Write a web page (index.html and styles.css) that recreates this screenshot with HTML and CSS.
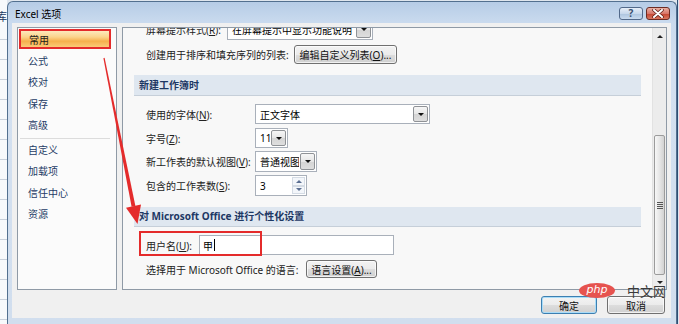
FILE: index.html
```html
<!DOCTYPE html>
<html lang="zh-CN">
<head>
    <meta charset="UTF-8">
    <title>Excel 选项</title>
    <link rel="stylesheet" href="styles.css">
</head>
<body>
    <div class="desktop">
        <div class="sheet-left"><span class="sheet-char">库</span></div>

        <div class="window">
            <div class="titlebar">
                <span class="title">Excel 选项</span>
                <div class="caption">
                    <span class="cap-btn help">?</span>
                    <span class="cap-btn close">
                        <svg width="12" height="9" viewBox="0 0 12 9">
                            <path d="M2 1 L10 8 M10 1 L2 8" stroke="#5a1a12" stroke-width="3.4" stroke-linecap="round"/>
                            <path d="M2 1 L10 8 M10 1 L2 8" stroke="#fff" stroke-width="2" stroke-linecap="round"/>
                        </svg>
                    </span>
                </div>
            </div>

            <div class="client">
                <div class="panels">
                    <ul class="nav">
                        <li class="active">常用</li>
                        <li>公式</li>
                        <li>校对</li>
                        <li>保存</li>
                        <li>高级</li>
                        <li class="sep"></li>
                        <li>自定义</li>
                        <li>加载项</li>
                        <li>信任中心</li>
                        <li>资源</li>
                    </ul>

                    <div class="content">
                        <div class="scroll-area">
                            <div class="row tip">
                                <span class="label w-tip">屏幕提示样式(<u>R</u>):</span>
                                <div class="combo w146">
                                    <span class="val">在屏幕提示中显示功能说明</span>
                                    <span class="drop"><i></i></span>
                                </div>
                            </div>
                            <div class="row sort">
                                <span class="label w-sort">创建用于排序和填充序列的列表:</span>
                                <button class="btn w103">编辑自定义列表(<u>O</u>)...</button>
                            </div>

                            <div class="section first">新建工作簿时</div>
                            <div class="row field r-font">
                                <span class="label w-field">使用的字体(<u>N</u>):</span>
                                <div class="combo w175">
                                    <span class="val">正文字体</span>
                                    <span class="drop"><i></i></span>
                                </div>
                            </div>
                            <div class="row field r-size">
                                <span class="label w-field">字号(<u>Z</u>):</span>
                                <div class="combo w33">
                                    <span class="val">11</span>
                                    <span class="drop"><i></i></span>
                                </div>
                            </div>
                            <div class="row field r-view">
                                <span class="label w-field">新工作表的默认视图(<u>V</u>):</span>
                                <div class="combo w62">
                                    <span class="val">普通视图</span>
                                    <span class="drop"><i></i></span>
                                </div>
                            </div>
                            <div class="row field r-sheets">
                                <span class="label w-field">包含的工作表数(<u>S</u>):</span>
                                <div class="spin">
                                    <span class="val">3</span>
                                    <span class="arrows"><i class="up"></i><i class="down"></i></span>
                                </div>
                            </div>

                            <div class="section second">对 Microsoft Office 进行个性化设置</div>
                            <div class="row user">
                                <span class="label w-user">用户名(<u>U</u>):</span>
                                <div class="textbox">甲<span class="caret"></span></div>
                            </div>
                            <div class="row lang">
                                <span class="label w-lang">选择用于 Microsoft Office 的语言:</span>
                                <button class="btn w71">语言设置(<u>A</u>)...</button>
                            </div>
                        </div>

                        <div class="scrollbar">
                            <div class="sb-btn up"><i></i></div>
                            <div class="sb-gap"></div>
                            <div class="sb-thumb"><span class="grip"></span></div>
                            <div class="sb-btn down"><i></i></div>
                        </div>
                    </div>
                </div>

                <div class="footer">
                    <button class="btn ok">确定</button>
                    <button class="btn cancel">取消</button>
                </div>
            </div>
        </div>

        <div class="sheet-right"></div>
    </div>

    <!-- 标注 -->
    <svg class="annot" width="679" height="324" viewBox="0 0 679 324">
        <rect x="20" y="30" width="90" height="18" fill="none" stroke="#e42b2b" stroke-width="2"/>
        <rect x="140" y="232" width="121" height="23" fill="none" stroke="#e42b2b" stroke-width="2"/>
        <polygon points="103.4,58.2 104.6,57.8 135.4,206 131.6,206.8" fill="#e42b2b"/>
        <polygon points="141,204.6 126,207.8 137.5,224" fill="#e42b2b"/>
    </svg>

    <div class="watermark">
        <span class="wm-php">php</span>
        <span class="wm-cn">中文网</span>
    </div>
</body>
</html>
```

FILE: styles.css
```css
* {
    box-sizing: border-box;
}

body {
    margin: 0;
    width: 679px;
    height: 324px;
    overflow: hidden;
    position: relative;
    font-family: "Noto Sans", "Noto Sans CJK SC", sans-serif;
    font-size: 10px;
    color: #1e1e1e;
    background: #dfe6ee;
}

u {
    text-decoration: underline;
    text-underline-offset: 1px;
}

.desktop {
    display: flex;
    height: 324px;
}

.sheet-left {
    width: 7px;
    overflow: hidden;
    background: repeating-linear-gradient(#f7f9fb 0, #f7f9fb 19px, #c8d0da 19px, #c8d0da 20px);
}

.sheet-char {
    display: block;
    margin: 8px 0 0 -4px;
    font-size: 11px;
    color: #1f3b63;
}

.sheet-right {
    width: 2px;
    background: linear-gradient(to right, #2f4e74 0, #2f4e74 1px, #dbe5f0 1px);
}

.window {
    width: 670px;
    height: 323px;
    margin-top: 1px;
    border: 1px solid #53708f;
    border-bottom: none;
    border-radius: 6px 6px 0 0;
    background: linear-gradient(#b6cce6 0, #c9daee 20px, #d3e0f0 60px, #d1deee 100%);
    display: flex;
    flex-direction: column;
}

.titlebar {
    height: 21px;
    display: flex;
    justify-content: space-between;
    align-items: flex-start;
    padding: 0 6px 0 7px;
}

.title {
    line-height: 21px;
    padding-top: 2px;
    color: #000;
}

.caption {
    display: flex;
    gap: 3px;
    margin-top: 5px;
}

.cap-btn {
    width: 24px;
    height: 13px;
    border: 1px solid #52698a;
    border-radius: 3px;
    display: flex;
    align-items: center;
    justify-content: center;
}

.help {
    background: linear-gradient(#e6eef8 0, #c8d8ec 50%, #acc3de 51%, #c9dbef 100%);
    color: #3a4f70;
    font-weight: bold;
    font-size: 10px;
    line-height: 11px;
}

.close {
    border-color: #6b2c24;
    background: linear-gradient(#eab0a3 0, #d8776a 50%, #c4432f 51%, #d8765f 100%);
}

.client {
    flex: 1;
    margin: 0 5px 6px 4px;
    background: #f0f0f0;
    padding: 4px 4px 0 5px;
    display: flex;
    flex-direction: column;
}

.panels {
    display: flex;
    gap: 5px;
    height: 263px;
}

/* 左侧菜单 */
.nav {
    width: 100px;
    margin: 0;
    padding: 1px 0 0;
    list-style: none;
    background: #fbfbfb;
    border: 1px solid #8f9aa6;
}

.nav li {
    height: 21.5px;
    line-height: 21.5px;
    padding-left: 10px;
    color: #1e3b66;
}

.nav li.active {
    height: 19px;
    line-height: 19px;
    margin: 1px 6px 1.5px 2px;
    padding-left: 8px;
    color: #1b1b1b;
    background: linear-gradient(#fde9bd 0, #fbd48c 35%, #f6b04c 60%, #fbcf7e 100%);
    border: 1px solid #eab04c;
}

.nav li.sep {
    height: 3px;
    margin: 0 6px 0 2px;
    padding: 0;
    background: linear-gradient(transparent 1px, #dcdcdc 1px, #dcdcdc 2px, transparent 2px);
}

/* 右侧内容 */
.content {
    flex: 1;
    display: flex;
    border: 1px solid #8f9aa6;
    background: #f8f8f8;
    overflow: hidden;
}

.scroll-area {
    flex: 1;
    padding: 0 11px;
    display: flex;
    flex-direction: column;
}

.row {
    display: flex;
    align-items: center;
    padding-left: 12px;
    flex: none;
}

.label {
    flex: none;
    color: #222;
}

.w-tip { width: 81px; }
.w-sort { width: 148px; }
.w-field { width: 109px; }
.w-user { width: 53px; }
.w-lang { width: 160px; }

.row.tip { margin-top: -9px; height: 21px; }
.row.sort { margin-top: 5px; height: 19px; }
.row.r-font { margin-top: 8px; height: 20px; }
.row.r-size { margin-top: 4px; height: 20px; }
.row.r-view { margin-top: 3px; height: 21px; }
.row.r-sheets { margin-top: 3px; height: 21px; }
.row.user { margin-top: 8px; height: 20px; }
.row.lang { margin-top: 5px; height: 18px; }

.section {
    height: 21px;
    line-height: 20px;
    padding-left: 5px;
    font-weight: bold;
    color: #1d3864;
    background: #dfe7f0;
    border-bottom: 1px solid #c6cfd9;
    flex: none;
}

.section.first { margin-top: 11px; }
.section.second { margin-top: 11px; height: 20px; line-height: 19px; }

.combo {
    height: 100%;
    display: flex;
    border: 1px solid #a9b0ba;
    background: #fff;
}

.combo .val,
.spin .val {
    flex: 1;
    padding-left: 4px;
    display: flex;
    align-items: center;
    color: #000;
    white-space: nowrap;
    overflow: hidden;
}

.combo .drop {
    width: 15px;
    margin: 1px;
    border: 1px solid #8f9296;
    border-radius: 2px;
    background: linear-gradient(#f6f6f6 0, #e6e6e6 50%, #d4d4d4 51%, #dedede 100%);
    display: flex;
    align-items: center;
    justify-content: center;
}

.combo .drop i {
    border-left: 3px solid transparent;
    border-right: 3px solid transparent;
    border-top: 3px solid #111;
}

.w146 { width: 146px; }
.w175 { width: 175px; }
.w33 { width: 33px; }
.w62 { width: 62px; }
.w103 { width: 103px; }
.w71 { width: 71px; }

.spin {
    width: 52px;
    height: 100%;
    display: flex;
    border: 1px solid #a9b0ba;
    background: #fff;
}

.spin .arrows {
    width: 13px;
    margin: 1px 1px 1px 0;
    display: flex;
    flex-direction: column;
}

.spin .arrows i {
    flex: 1;
    display: flex;
    align-items: center;
    justify-content: center;
    border: 1px solid #d4dbe4;
    background: #f3f6fa;
}

.spin .arrows i::after {
    content: "";
    border-left: 3px solid transparent;
    border-right: 3px solid transparent;
}

.spin .arrows .up::after { border-bottom: 3px solid #5b6f92; }
.spin .arrows .down::after { border-top: 3px solid #5b6f92; }

.textbox {
    width: 195px;
    height: 100%;
    border: 1px solid #a9b0ba;
    background: #fff;
    padding-left: 3px;
    display: flex;
    align-items: center;
    color: #000;
}

.caret {
    width: 1px;
    height: 12px;
    margin-left: 1px;
    background: #000;
}

.btn {
    height: 100%;
    padding: 0;
    font-family: inherit;
    font-size: 10px;
    color: #111;
    border: 1px solid #707070;
    border-radius: 3px;
    background: linear-gradient(#f3f3f3 0, #ebebeb 50%, #dddddd 51%, #d0d0d0 100%);
    box-shadow: inset 0 0 0 1px rgba(255,255,255,0.7);
}

/* 滚动条 */
.scrollbar {
    width: 14px;
    display: flex;
    flex-direction: column;
    background: #ececec;
    border-left: 1px solid #e2e2e2;
}

.sb-btn {
    display: flex;
    align-items: center;
    justify-content: center;
}

.sb-btn.up { height: 16px; }
.sb-btn.down { height: 14px; }

.sb-btn.up i {
    border-left: 3px solid transparent;
    border-right: 3px solid transparent;
    border-bottom: 3px solid #222;
}

.sb-btn.down i {
    border-left: 3px solid transparent;
    border-right: 3px solid transparent;
    border-top: 3px solid #222;
}

.sb-gap {
    height: 91px;
}

.sb-thumb {
    height: 140px;
    margin: 0 1px;
    border: 1px solid #9b9b9b;
    border-radius: 2px;
    background: linear-gradient(to right, #f7f7f7 0, #e6e6e6 50%, #d2d2d2 100%);
    display: flex;
    align-items: center;
    justify-content: center;
}

.grip {
    width: 6px;
    height: 7px;
    background: repeating-linear-gradient(#555 0, #555 1px, transparent 1px, transparent 2px);
}

.footer {
    display: flex;
    justify-content: flex-end;
    gap: 10px;
    margin-top: 6px;
    padding-right: 2px;
}

.footer .btn {
    height: 18px;
}

.btn.ok {
    width: 56px;
    border-color: #3c7fb1;
    box-shadow: inset 0 0 0 1px #a9dcf8;
}

.btn.cancel {
    width: 58px;
}

/* 标注与水印 */
.annot {
    position: absolute;
    left: 0;
    top: 0;
    pointer-events: none;
}

.watermark {
    position: absolute;
    left: 579px;
    top: 283px;
    display: flex;
    align-items: center;
    gap: 12px;
}

.wm-php {
    width: 36px;
    height: 15px;
    border-radius: 50%;
    background: #e6534f;
    color: #fff;
    font-family: "DejaVu Sans", sans-serif;
    font-style: italic;
    font-size: 11px;
    line-height: 14px;
    text-align: center;
}

.wm-cn {
    font-family: "Noto Sans CJK SC", sans-serif;
    font-size: 13px;
    line-height: 15px;
    color: #3a3a3a;
}
```
